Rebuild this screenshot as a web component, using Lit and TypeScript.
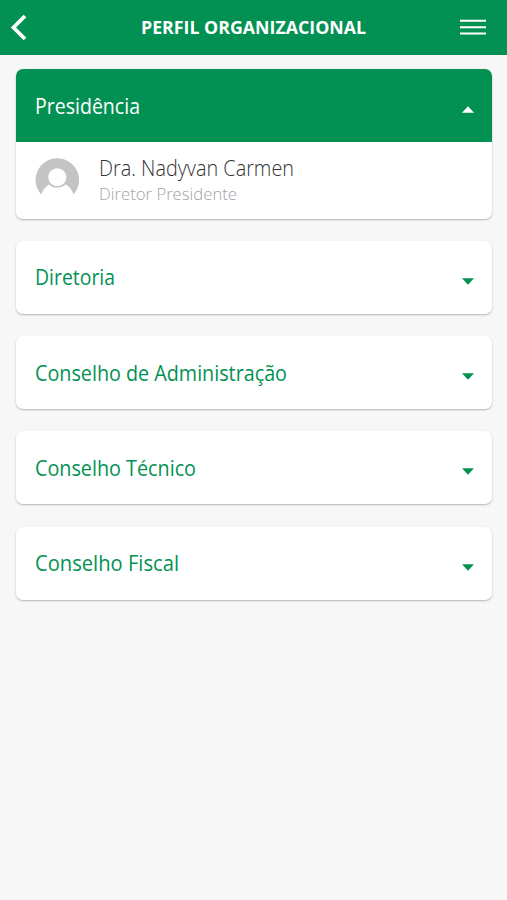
import { LitElement, html, css, svg } from "lit";
import { customElement } from "lit/decorators.js";

interface Person { name: string; role: string; nameWidth: number; roleWidth: number }
interface Section { title: string; width: number; people?: Person[] }

const SECTIONS: Section[] = [
  { title: "Presidência", width: 105, people: [{ name: "Dra. Nadyvan Carmen", role: "Diretor Presidente", nameWidth: 195, roleWidth: 138 }] },
  { title: "Diretoria", width: 80 },
  { title: "Conselho de Administração", width: 252 },
  { title: "Conselho Técnico", width: 161 },
  { title: "Conselho Fiscal", width: 144 },
];

const label = (text: string, width: number, size: number, height: number, baseline: number) => html`
  <svg class="label" width=${width} height=${height}>${svg`<text x="0" y=${baseline} font-size=${size} textLength=${width} lengthAdjust="spacingAndGlyphs">${text}</text>`}</svg>`;

@customElement("app-root")
export class AppRoot extends LitElement {
  static styles = css`
    :host { display: block; height: 900px; background: #f7f7f7; font-family: "Open Sans", "Noto Sans", sans-serif; }
    * { box-sizing: border-box; }
    svg { display: block; }
    .label { fill: currentColor; overflow: visible; }
    .bar { height: 54.5px; background: #039153; color: #fff; display: grid; grid-template-columns: 1fr auto 1fr; align-items: center; padding: 0 21px 0 10px; }
    .title { font-weight: 700; margin-left: 11px; }
    .menu { justify-self: end; }
    .list { padding: 14.5px 15px 14.5px 15.5px; display: flex; flex-direction: column; gap: 22.3px; }
    .card { background: #fff; border-radius: 7px; box-shadow: 0 1px 2px rgba(0,0,0,.27); overflow: hidden; }
    .head { height: 73px; display: flex; align-items: center; justify-content: space-between; padding: 0 18px 0 19.5px; color: #039153; }
    .arrow { margin-top: 8px; }
    .open .head { background: #039153; color: #fff; }
    .person { height: 76.6px; display: flex; padding: 16px 19.5px; gap: 20px; font-weight: 350; }
    .name { color: #333; }
    .role { color: #a3a3a3; }
  `;

  render() {
    return html`
      <header class="bar">
        <svg width="18" height="30" viewBox="0 0 18 30"><path d="M15 4 3.5 15.5 15 27" fill="none" stroke="#fff" stroke-width="3.8"/></svg>
        <div class="title">${label("PERFIL ORGANIZACIONAL", 225, 18, 26, 19.5)}</div>
        <svg class="menu" width="26" height="20" viewBox="0 0 26 20"><path d="M0 3.8H26M0 10.2H26M0 16.5H26" stroke="#fff" stroke-width="2"/></svg>
      </header>
      <main class="list">
        ${SECTIONS.map((s) => html`
          <section class="card ${s.people ? "open" : ""}">
            <div class="head">
              ${label(s.title, s.width, 21.5, 30, 23)}
              <svg class="arrow" width="12" height="7" viewBox="0 0 12 7"><path d=${s.people ? "M0 6.7 6 .3 12 6.7Z" : "M0 .3H12L6 6.7Z"} fill="currentColor"/></svg>
            </div>
            ${s.people?.map((p) => html`
              <div class="person">
                <svg width="44" height="44" viewBox="0 0 44 44"><path fill="#c4c4c4" fill-rule="evenodd" d="M22 .3A22 21.700 0 0 1 38.500 36.500Q36.500 30 31 26.500Q27 29.700 22.300 29.700Q17.500 29.700 14 26.500Q8.500 30 6.200 36.500A22 21.700 0 0 1 22 .3ZM22.300 10.200a9 9 0 1 0 0 18 9 9 0 0 0 0-18Z"/></svg>
                <div>
                  <div class="name">${label(p.name, p.nameWidth, 21.5, 26, 18)}</div>
                  <div class="role">${label(p.role, p.roleWidth, 17, 22, 16)}</div>
                </div>
              </div>`)}
          </section>`)}
      </main>`;
  }
}
